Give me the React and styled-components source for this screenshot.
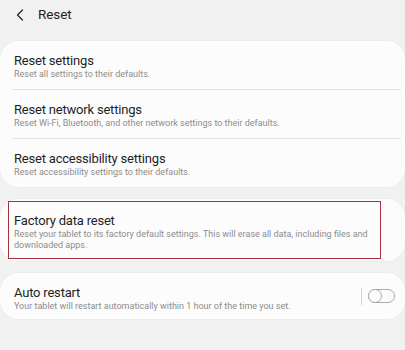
import React from 'react';
import styled, { createGlobalStyle, css } from 'styled-components';

const GlobalStyle = createGlobalStyle`
  html, body {
    margin: 0;
    padding: 0;
    background: #f1f1f1;
  }
  body {
    font-family: Roboto, "Liberation Sans", sans-serif;
    -webkit-font-smoothing: antialiased;
  }
`;

const resetItems = [
  {
    title: 'Reset settings',
    desc: 'Reset all settings to their defaults.',
  },
  {
    title: 'Reset network settings',
    desc: 'Reset Wi-Fi, Bluetooth, and other network settings to their defaults.',
  },
  {
    title: 'Reset accessibility settings',
    desc: 'Reset accessibility settings to their defaults.',
  },
];

const BackIcon = () => (
  <svg width="8" height="12" viewBox="0 0 8 12" fill="none">
    <path
      d="M6.5 1 L1.5 6 L6.5 11"
      stroke="#2a2a2a"
      strokeWidth="1.3"
      strokeLinecap="round"
      strokeLinejoin="round"
    />
  </svg>
);

const App = () => {
  return (
    <>
      <GlobalStyle />
      <StPage>
        <StHeader>
          <StBack>
            <BackIcon />
          </StBack>
          <StHeaderTitle>Reset</StHeaderTitle>
        </StHeader>

        <StCardList>
          <StCard>
            {resetItems.map((item, idx) => (
              <React.Fragment key={item.title}>
                {idx > 0 && <StDivider />}
                <StRow>
                  <StTitle>{item.title}</StTitle>
                  <StDesc>{item.desc}</StDesc>
                </StRow>
              </React.Fragment>
            ))}
          </StCard>

          <StCard $pad="2px 0">
            <StRow $highlight>
              <StTitle>Factory data reset</StTitle>
              <StDesc>
                Reset your tablet to its factory default settings. This will
                erase all data, including files and downloaded apps.
              </StDesc>
            </StRow>
          </StCard>

          <StCard>
            <StSwitchRow>
              <StRow $last>
                <StTitle>Auto restart</StTitle>
                <StDesc>
                  Your tablet will restart automatically within 1 hour of the
                  time you set.
                </StDesc>
              </StRow>
              <StVLine />
              <StToggle>
                <StKnob />
              </StToggle>
            </StSwitchRow>
          </StCard>
        </StCardList>
      </StPage>
    </>
  );
};

export default App;

const StPage = styled.div`
  width: 405px;
  height: 350px;
  overflow: hidden;
  background: #f1f1f1;
`;

const StHeader = styled.div`
  display: flex;
  align-items: center;
  gap: 14px;

  height: 28px;
  padding: 0 0 0 16px;
`;

const StBack = styled.div`
  display: flex;
  align-items: center;
  margin-top: 1px;
`;

const StHeaderTitle = styled.div`
  font-size: 13.5px;
  color: #1f1f1f;
  letter-spacing: -0.1px;
`;

const StCardList = styled.div`
  display: flex;
  flex-direction: column;
  gap: 12px;

  margin-top: 13px;
`;

const StCard = styled.div`
  padding: ${({ $pad }) => $pad || '0'};
  background: #fcfcfc;
  border-radius: 18px;
  box-shadow: 0 0 0 0.5px #e6e6e6;
`;

const StRow = styled.div`
  display: flex;
  flex-direction: column;

  padding: 11px 24px 9px 14px;

  ${({ $highlight }) =>
    $highlight &&
    css`
      margin: 0 24px 0 8px;
      padding: 10px 8px 7px 5px;
      border: 1.5px solid #a8323c;
    `}

  ${({ $last }) =>
    $last &&
    css`
      flex: 1;
      padding-bottom: 7px;
      padding-right: 10px;
    `}
`;

const StTitle = styled.div`
  font-size: 13px;
  line-height: 17px;
  letter-spacing: -0.2px;
  color: #1f1f1f;
`;

const StDesc = styled.div`
  font-size: 9px;
  line-height: 11px;
  color: #8c8c8c;
`;

const StDivider = styled.div`
  height: 1px;
  margin: 0 4px 0 12px;
  background: #e4e4e4;
`;

const StSwitchRow = styled.div`
  display: flex;
  align-items: center;
  padding-right: 10px;
`;

const StVLine = styled.div`
  width: 1px;
  height: 17px;
  margin-right: 6px;
  background: #d4d4d4;
`;

const StToggle = styled.div`
  display: flex;
  align-items: center;

  box-sizing: border-box;
  width: 27px;
  height: 14px;
  border: 1px solid #a9a9a9;
  border-radius: 7px;
`;

const StKnob = styled.div`
  box-sizing: border-box;
  width: 14px;
  height: 14px;
  margin-left: -1px;
  border: 1px solid #a9a9a9;
  border-radius: 50%;
  background: #fcfcfc;
`;
